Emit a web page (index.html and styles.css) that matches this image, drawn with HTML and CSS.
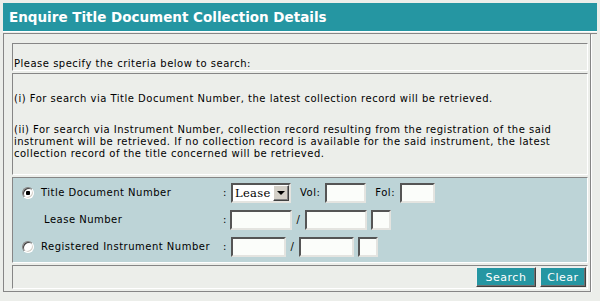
FILE: index.html
```html
<!DOCTYPE html>
<html>
	<head>
		<title>Enquire Title Document Collection Details</title>
		<link rel="stylesheet" href="styles.css">
	</head>
	<body>
		<div class="page">
			<div class="header">
				<h1 class="title">Enquire Title Document Collection Details</h1>
			</div>
			<div class="frame">
				<div class="cell intro">Please specify the criteria below to search:</div>
				<div class="cell notes">
					<p>(i) For search via Title Document Number, the latest collection record will be retrieved.</p>
					<p>(ii) For search via Instrument Number, collection record resulting from the registration of the said instrument will be retrieved. If no collection record is available for the said instrument, the latest collection record of the title concerned will be retrieved.</p>
				</div>
				<div class="cell panel">
					<input type="radio" name="searchby" class="radio" checked>
					<label class="label">Title Document Number</label>
					<span class="colon">:</span>
					<div class="fields">
						<div class="select">
							<span class="select-text">Lease</span>
							<span class="select-btn"><span class="arrow"></span></span>
						</div>
						<span class="tag">Vol:</span>
						<input type="text" class="box vol">
						<span class="tag">Fol:</span>
						<input type="text" class="box fol">
					</div>

					<span></span>
					<label class="label sub">Lease Number</label>
					<span class="colon">:</span>
					<div class="fields">
						<input type="text" class="box lease1">
						<span class="slash">/</span>
						<input type="text" class="box lease2">
						<input type="text" class="box tiny">
					</div>

					<input type="radio" name="searchby" class="radio">
					<label class="label">Registered Instrument Number</label>
					<span class="colon">:</span>
					<div class="fields">
						<input type="text" class="box inst1">
						<span class="slash">/</span>
						<input type="text" class="box inst2">
						<input type="text" class="box tiny">
					</div>
				</div>
				<div class="cell actions">
					<button class="btn search">Search</button>
					<button class="btn clear">Clear</button>
				</div>
			</div>
		</div>
	</body>
</html>
```

FILE: styles.css
```css
html {
  height: 100%;
}

body {
  margin: 0;
  background-color: #ECEEEA;
  color: #000;
  font-family: "DejaVu Sans", Verdana, sans-serif;
  font-size: 10px;
  letter-spacing: .5px;
  line-height: 12px;
}

.page {
  padding: 3px 3px 0 3px;
}

.header {
  border-bottom: 1px solid #868686;
  padding-bottom: 1px;
}

.title {
  margin: 0;
  height: 28px;
  line-height: 28px;
  padding-left: 6px;
  background-color: #2596A2;
  border-bottom: 1px solid #fff;
  color: #fff;
  font-size: 13.5px;
  font-weight: bold;
  letter-spacing: 0;
}

.frame {
  display: flex;
  flex-direction: column;
  gap: 2px;
  margin-right: 6px;
  padding: 9px 2px 2px 8px;
  border: 1px solid #868686;
  border-top: none;
  box-shadow: 1px 1px 0 #fff;
}

.cell {
  border: 1px solid #868686;
  border-right-color: #fff;
  border-bottom-color: #fff;
}

.intro {
  padding: 14px 0 0 1px;
  height: 12px;
}

.notes {
  padding: 19px 0 14px 1px;
}

.notes p {
  margin: 0;
}

.notes p + p {
  margin-top: 19px;
}

.panel {
  display: grid;
  grid-template-columns: 19px 182px 7px 1fr;
  grid-auto-rows: 20px;
  row-gap: 7px;
  align-items: center;
  padding: 5px 0 5px 9px;
  background-color: #BDD4D7;
}

.radio {
  appearance: none;
  width: 12px;
  height: 12px;
  margin: 0;
  border-radius: 50%;
  border: 1px solid #808080;
  border-right-color: #fff;
  border-bottom-color: #fff;
  box-shadow: inset 1px 1px 0 #404040, inset -1px -1px 0 #d4d0c8;
  background-color: #fff;
}

.radio:checked {
  background-image: radial-gradient(circle, #000 0, #000 2px, #fff 2.5px);
}

.label.sub {
  padding-left: 3px;
}

.fields {
  display: flex;
  align-items: center;
  height: 20px;
}

.box {
  box-sizing: border-box;
  height: 20px;
  margin: 0;
  padding: 0 2px;
  border: 2px solid #555;
  border-right-color: #e4e4e0;
  border-bottom-color: #e4e4e0;
  background-color: #FBFDFA;
  font-size: 10px;
}

.select {
  display: flex;
  align-items: center;
  box-sizing: border-box;
  width: 60px;
  height: 20px;
  margin-left: 1px;
  border: 2px solid #555;
  border-right-color: #e4e4e0;
  border-bottom-color: #e4e4e0;
  background-color: #fff;
}

.select-text {
  flex: 1;
  padding-left: 2px;
  font-family: "DejaVu Serif", "Liberation Serif", serif;
  font-size: 11.5px;
  letter-spacing: .3px;
}

.select-btn {
  display: flex;
  align-items: center;
  justify-content: center;
  box-sizing: border-box;
  width: 16px;
  height: 16px;
  background-color: #D4D0C8;
  border: 1px solid #fff;
  border-right-color: #404040;
  border-bottom-color: #404040;
  box-shadow: inset -1px -1px 0 #808080;
}

.arrow {
  width: 0;
  height: 0;
  border-left: 4px solid transparent;
  border-right: 4px solid transparent;
  border-top: 4px solid #000;
}

.tag {
  margin-left: 9px;
  margin-right: 5px;
}

.vol {
  width: 41px;
}

.fol {
  width: 35px;
}

.slash {
  width: 13px;
  text-align: center;
}

.lease1 {
  width: 62px;
}

.lease2 {
  width: 62px;
}

.inst1 {
  width: 55px;
  margin-left: 1px;
}

.inst2 {
  width: 55px;
}

.tiny {
  width: 20px;
  margin-left: 4px;
}

.actions {
  display: flex;
  justify-content: flex-end;
  gap: 4px;
  padding: 1px 1px 1px 0;
}

.btn {
  box-sizing: border-box;
  height: 20px;
  margin: 0;
  padding: 0;
  background-color: #2596A2;
  border: 1px solid #f0f0f0;
  border-right-color: #404040;
  border-bottom-color: #404040;
  box-shadow: inset -1px -1px 0 #707070;
  color: #fff;
  font-family: "DejaVu Sans", Verdana, sans-serif;
  font-size: 11px;
  letter-spacing: .5px;
}

.search {
  width: 60px;
}

.clear {
  width: 46px;
}
```
